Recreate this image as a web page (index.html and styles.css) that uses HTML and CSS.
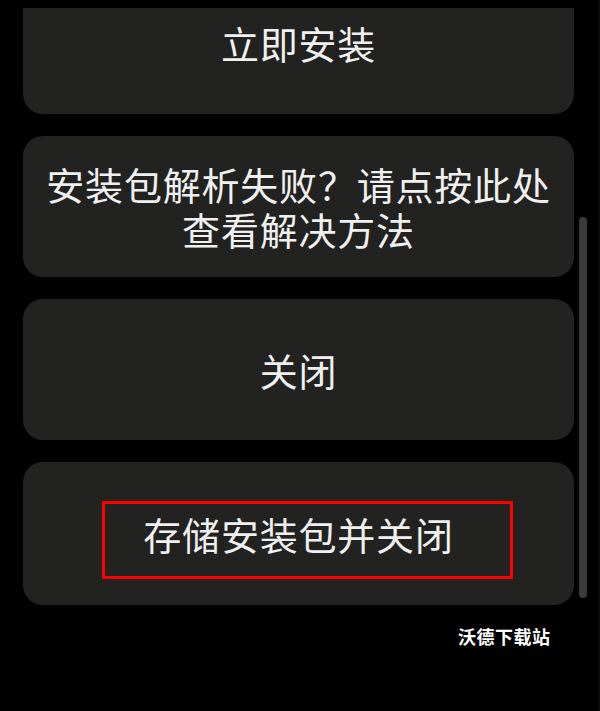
FILE: index.html
```html
<html>
  <head>
    <title>安装</title>
    <link rel="stylesheet" href="styles.css">
  </head>
  <body>
    <div id="screen">
      <div class="list">
        <div class="card first">立即安装</div>
        <div class="card two-line">安装包解析失败？请点按此处<br>查看解决方法</div>
        <div class="card">关闭</div>
        <div class="card last">
          存储安装包并关闭
          <span class="mark"></span>
        </div>
      </div>
      <div class="scrollbar"></div>
      <div class="watermark">沃德下载站</div>
    </div>
  </body>
</html>
```

FILE: styles.css
```css
body {
    margin: 0;
    background: #000;
    font-family: "Noto Sans CJK SC", "Noto Sans", sans-serif;
}
#screen {
    position: relative;
    width: 600px;
    height: 711px;
    overflow: hidden;
    background: #000;
    border-right: 2px solid #0c0c0c;
    box-sizing: border-box;
}
.list {
    margin-top: 8px;
    height: 620px;
    overflow: hidden;
}
.card {
    position: relative;
    height: 141px;
    margin: 0 24px 22px 23px;
    background: #222321;
    border-radius: 20px;
    color: #f0f0f0;
    font-size: 38px;
    line-height: 45px;
    letter-spacing: 0.8px;
    text-align: center;
    display: flex;
    align-items: center;
    justify-content: center;
}
.first {
    margin-top: -35px;
    padding-bottom: 3px;
    box-sizing: border-box;
}
.two-line {
    padding-bottom: 2px;
    box-sizing: border-box;
}
.last {
    height: 143px;
}
.mark {
    position: absolute;
    left: 79px;
    top: 39px;
    width: 411px;
    height: 78px;
    border: 3.5px solid #ff0000;
    box-sizing: border-box;
}
.scrollbar {
    position: absolute;
    left: 579px;
    top: 217px;
    width: 8px;
    height: 381px;
    border-radius: 4px;
    background: #3a3b38;
}
.watermark {
    position: absolute;
    left: 458px;
    top: 625px;
    color: #fff;
    font-size: 18px;
    font-weight: bold;
    line-height: 22px;
    letter-spacing: 0.5px;
}
```
